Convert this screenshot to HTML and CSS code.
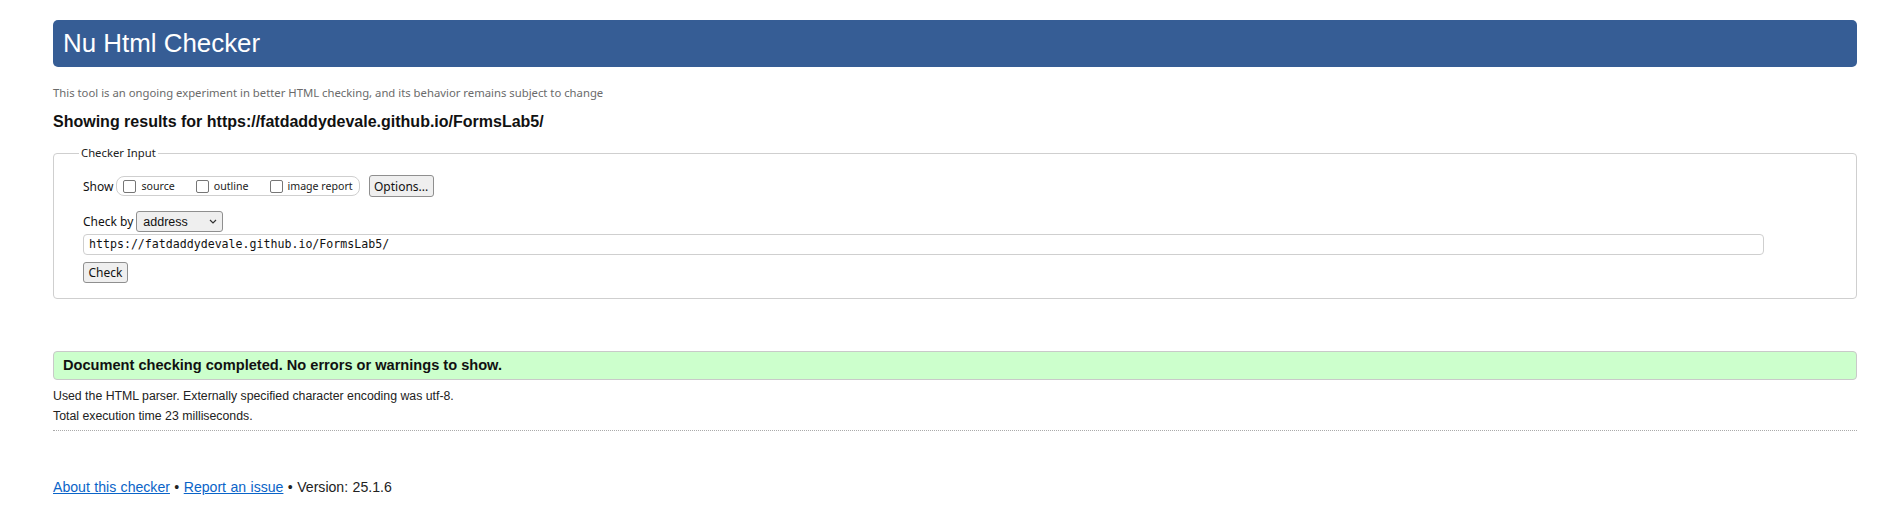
FILE: index.html
```html
<!DOCTYPE html>
<html lang="en">
<head>
<meta charset="utf-8">
<title>Nu Html Checker</title>
<link rel="stylesheet" href="styles.css">
</head>
<body>
<div class="page">
  <h1 class="title">Nu Html Checker</h1>
  <p class="note">This tool is an ongoing experiment in better HTML checking, and its behavior remains subject to change</p>
  <h2 class="results">Showing results for https://fatdaddydevale.github.io/FormsLab5/</h2>

  <fieldset class="checker">
    <legend>Checker Input</legend>
    <div class="row show-row">
      <span class="label">Show</span>
      <div class="toggles">
        <label class="toggle"><span class="cb"></span>source</label>
        <label class="toggle"><span class="cb"></span>outline</label>
        <label class="toggle"><span class="cb"></span>image report</label>
      </div>
      <span class="btn options">Options...</span>
    </div>
    <div class="row by-row">
      <span class="label">Check by</span>
      <span class="select">address<svg class="chev" width="8" height="5" viewBox="0 0 8 5"><path d="M1 1 L4 4 L7 1" fill="none" stroke="#333" stroke-width="1.2"/></svg></span>
    </div>
    <div class="url">https://fatdaddydevale.github.io/FormsLab5/</div>
    <div class="check-row"><span class="btn check">Check</span></div>
  </fieldset>

  <div class="success">Document checking completed. No errors or warnings to show.</div>
  <p class="meta first">Used the HTML parser. Externally specified character encoding was utf-8.</p>
  <p class="meta">Total execution time 23 milliseconds.</p>
  <div class="rule"></div>

  <p class="footer"><a href="#">About this checker</a> • <a href="#">Report an issue</a> • Version: 25.1.6</p>
</div>
</body>
</html>
```

FILE: styles.css
```css
html, body {
  margin: 0;
  padding: 0;
  background: #fff;
}

.page {
  padding: 20px 22px 0 53px;
  font-family: "Liberation Sans", Arial, sans-serif;
  color: #111;
}

.title {
  margin: 0;
  height: 47px;
  line-height: 47px;
  padding-left: 10px;
  background: #365d95;
  color: #fff;
  border-radius: 5px;
  font-weight: normal;
  font-size: 25.9px;
}

.note {
  margin: 19px 0 0;
  line-height: 14px;
  font-family: "Noto Sans", sans-serif;
  font-size: 11.3px;
  color: #6b6b6b;
}

.results {
  margin: 13px 0 0;
  line-height: 18px;
  font-size: 16px;
  font-weight: bold;
  color: #111;
}

.checker {
  margin: 14px 0 0;
  padding: 14px 20px 15px 29px;
  border: 1px solid #cfcfcf;
  border-radius: 4px;
  font-family: "Noto Sans", sans-serif;
  font-size: 12px;
  color: #111;
}

.checker legend {
  margin-left: -4px;
  padding: 0 2px;
  line-height: 16px;
  font-size: 11.3px;
  color: #222;
}

.row {
  display: flex;
  align-items: center;
}

.show-row {
  height: 22px;
}

.label {
  margin-right: 3px;
}

.toggles {
  display: flex;
  align-items: center;
  height: 18px;
  padding: 0 6px;
  border: 1px solid #cfcfcf;
  border-radius: 8px;
  gap: 21px;
  font-size: 10.6px;
  color: #222;
}

.toggle {
  display: flex;
  align-items: center;
}

.cb {
  width: 11px;
  height: 11px;
  border: 1px solid #767676;
  border-radius: 2px;
  margin-right: 5px;
  background: #fff;
}

.btn {
  display: inline-flex;
  align-items: center;
  justify-content: center;
  box-sizing: border-box;
  height: 22px;
  border: 1px solid #8f8f8f;
  border-radius: 3px;
  background: #efefef;
  color: #111;
  font-family: "Noto Sans", sans-serif;
  font-size: 12px;
}

.options {
  margin-left: 9px;
  width: 65px;
}

.by-row {
  margin-top: 14px;
  height: 21px;
}

.select {
  display: inline-flex;
  align-items: center;
  justify-content: space-between;
  box-sizing: border-box;
  width: 87px;
  height: 21px;
  padding: 0 5px 0 6px;
  border: 1px solid #8f8f8f;
  border-radius: 3px;
  background: #efefef;
  font-family: "Liberation Sans", Arial, sans-serif;
  font-size: 12.5px;
  color: #111;
}

.url {
  box-sizing: border-box;
  margin-top: 2px;
  width: 1681px;
  height: 21px;
  line-height: 19px;
  padding-left: 5px;
  border: 1px solid #cfcfcf;
  border-radius: 4px;
  font-family: "DejaVu Sans Mono", "Liberation Mono", monospace;
  font-size: 11.6px;
  color: #111;
}

.check-row {
  margin-top: 7px;
  display: flex;
}

.check {
  width: 45px;
  height: 21px;
}

.success {
  margin-top: 52px;
  height: 27px;
  line-height: 27px;
  padding-left: 9px;
  border: 1px solid #c9c9c9;
  border-radius: 4px;
  background: #ccffcc;
  font-weight: bold;
  font-size: 14.6px;
  color: #111;
}

.meta {
  margin: 6px 0 0;
  line-height: 14px;
  font-size: 12.3px;
  color: #222;
}

.meta.first {
  margin-top: 9px;
}

.rule {
  margin-top: 7px;
  border-top: 1px dotted #aaa;
}

.footer {
  margin: 48px 0 0;
  line-height: 16px;
  font-size: 14.1px;
  word-spacing: 0.5px;
  color: #222;
}

.footer a {
  color: #0a64c8;
  text-decoration: underline;
}
```
